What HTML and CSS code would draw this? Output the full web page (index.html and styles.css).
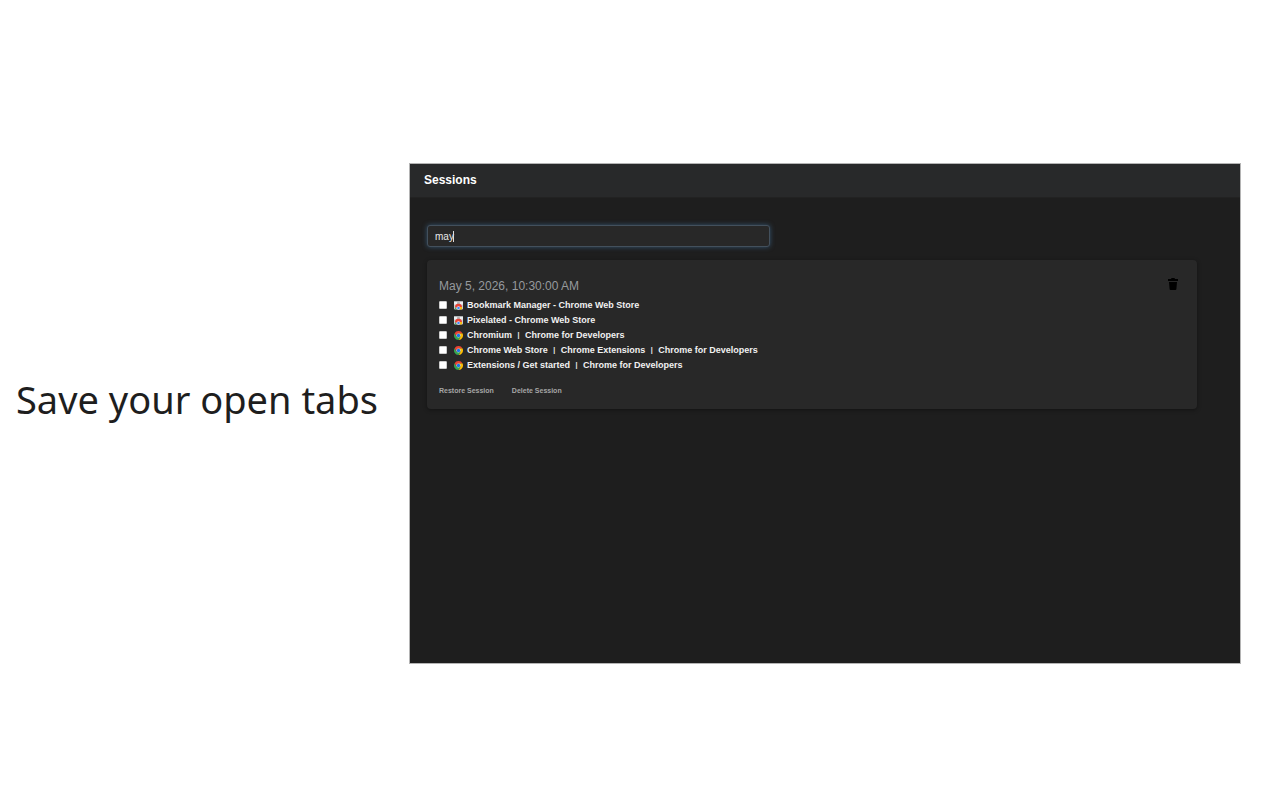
FILE: index.html
```html
<!DOCTYPE html>
<html lang="en">
<head>
<meta charset="utf-8">
<meta name="viewport" content="width=device-width, initial-scale=1">
<title>Sessions</title>
<link rel="stylesheet" href="styles.css">
</head>
<body>
<svg class="defs" aria-hidden="true">
  <symbol id="store" viewBox="0 0 18 16">
    <path fill="#c9ccd0" d="M0 0h18v14a2 2 0 0 1-2 2H2a2 2 0 0 1-2-2z"/>
    <path fill="#eceef0" d="M0 0h18v6H0z"/>
    <rect x="6" y="2" width="6" height="2" rx="1" fill="#777b80"/>
    <path fill="#e94335" d="M2 12a7 7 0 0 1 14-1l-7 1z"/>
    <path fill="#34a853" d="M2 11l4 5H3a6 6 0 0 1-1-5z"/>
    <path fill="#fbbc05" d="M12 11h4c0 2 0 4-1 5h-4z"/>
    <circle cx="9" cy="13" r="3.5" fill="#fff"/>
    <circle cx="9" cy="13" r="2.6" fill="#4285f4"/>
  </symbol>
  <symbol id="chrome" viewBox="0 0 48 48">
    <path fill="#fbbc05" d="M24 12h20.800A24 24 0 0 1 24 48l10.400-18z"/>
    <path fill="#34a853" d="M3.200 12A24 24 0 0 0 24 48l10.400-18H13.600z"/>
    <path fill="#ea4335" d="M3.200 12A24 24 0 0 1 44.800 12H24L13.600 30z"/>
    <circle cx="24" cy="24" r="11" fill="#fff"/>
    <circle cx="24" cy="24" r="9.500" fill="#1a73e8"/>
  </symbol>
</svg>
<main class="promo">
  <h1 class="headline">Save your open tabs</h1>
  <section class="window">
    <header class="bar"><h2 class="title">Sessions</h2></header>
    <div class="content">
      <div class="search">
        <input class="search-input" type="text" value="may" aria-label="Search sessions">
        <span class="caret"></span>
      </div>
      <article class="card">
        <div class="card-head">
          <h3 class="date">May 5, 2026, 10:30:00 AM</h3>
          <button class="trash" type="button" aria-label="Delete">
            <svg width="10" height="12" viewBox="0 0 10 12" aria-hidden="true"><path d="M3.500 0h3l.5 1h3v2H0V1h3zM1 4h8l-.6 7a1 1 0 0 1-1 1H2.600a1 1 0 0 1-1-1z"/></svg>
          </button>
        </div>
        <ul class="tabs">
          <li><label class="tab"><input class="check" type="checkbox"><svg class="icon"><use href="#store"/></svg><span>Bookmark Manager - Chrome Web Store</span></label></li>
          <li><label class="tab"><input class="check" type="checkbox"><svg class="icon"><use href="#store"/></svg><span>Pixelated - Chrome Web Store</span></label></li>
          <li><label class="tab"><input class="check" type="checkbox"><svg class="icon"><use href="#chrome"/></svg><span>Chromium <span class="sep">|</span> Chrome for Developers</span></label></li>
          <li><label class="tab"><input class="check" type="checkbox"><svg class="icon"><use href="#chrome"/></svg><span>Chrome Web Store <span class="sep">|</span> Chrome Extensions <span class="sep">|</span> Chrome for Developers</span></label></li>
          <li><label class="tab"><input class="check" type="checkbox"><svg class="icon"><use href="#chrome"/></svg><span>Extensions / Get started <span class="sep">|</span> Chrome for Developers</span></label></li>
        </ul>
        <div class="actions">
          <button class="action" type="button">Restore Session</button>
          <button class="action" type="button">Delete Session</button>
        </div>
      </article>
    </div>
  </section>
</main>
</body>
</html>
```
FILE: styles.css
```css
* { box-sizing: border-box; }
body { margin: 0; background: #fff; font-family: "Liberation Sans", Arial, sans-serif; }
h1, h2, h3, ul { margin: 0; padding: 0; font-weight: 400; }
.defs { position: absolute; width: 0; height: 0; }
.promo {
  min-height: 100vh;
  display: flex;
  align-items: center;
  gap: 31px;
  padding: 26px 39px 0 16px;
}
.headline {
  flex: none;
  padding-bottom: 28px;
  color: #1e1e1e;
  font: 400 38px/56px "Noto Sans", sans-serif;
  white-space: nowrap;
}
.window {
  flex: 1;
  min-height: 501px;
  background: #1e1e1e;
  border: 1px solid #b4b4b4;
}
.bar { padding: 8px 14px 9px; background: #28292a; border-bottom: 1px solid #222; }
.title { color: #fff; font-size: 12px; line-height: 16px; font-weight: 700; }
.content { padding: 27px 43px 28px 17px; }
.search { position: relative; width: 44.500%; }
.search-input {
  display: block;
  width: 100%;
  height: 22px;
  padding: 1px 7px 0;
  color: #e8e8e8;
  background: #282828;
  border: 1px solid #43505c;
  border-radius: 3px;
  box-shadow: 0 0 5px #34536f;
  outline: 0;
  font: 400 10px "Liberation Sans", Arial, sans-serif;
}
.caret { position: absolute; left: 26px; top: 6px; width: 1px; height: 11px; background: #ddd; }
.card {
  margin-top: 13px;
  padding: 18px 12px 12px;
  background: #282828;
  border-radius: 4px;
  box-shadow: 0 1px 4px rgba(0, 0, 0, .4);
}
.card-head { display: flex; justify-content: space-between; padding-right: 7px; }
.date { color: #96999d; font-size: 12px; line-height: 16px; }
.trash { height: 12px; padding: 0; border: 0; background: none; }
.trash svg { display: block; fill: #000; }
.tabs { list-style: none; padding-top: 4px; }
.tab { display: flex; align-items: center; height: 15px; color: #f1f1f1; font-size: 9px; font-weight: 700; }
.check { appearance: none; width: 8px; height: 8px; margin: 0 7px 0 0; background: #fff; border: 1px solid #ccc; border-radius: 1px; }
.icon { width: 9px; height: 9px; margin-right: 4px; }
.sep { margin: 0 3px; font-size: 7px; line-height: 1; vertical-align: 1px; }
.actions { display: flex; gap: 18px; padding-top: 12px; }
.action { padding: 0; border: 0; background: none; color: #a6a6a6; font: 700 7px/12px "Liberation Sans", Arial, sans-serif; }
```
